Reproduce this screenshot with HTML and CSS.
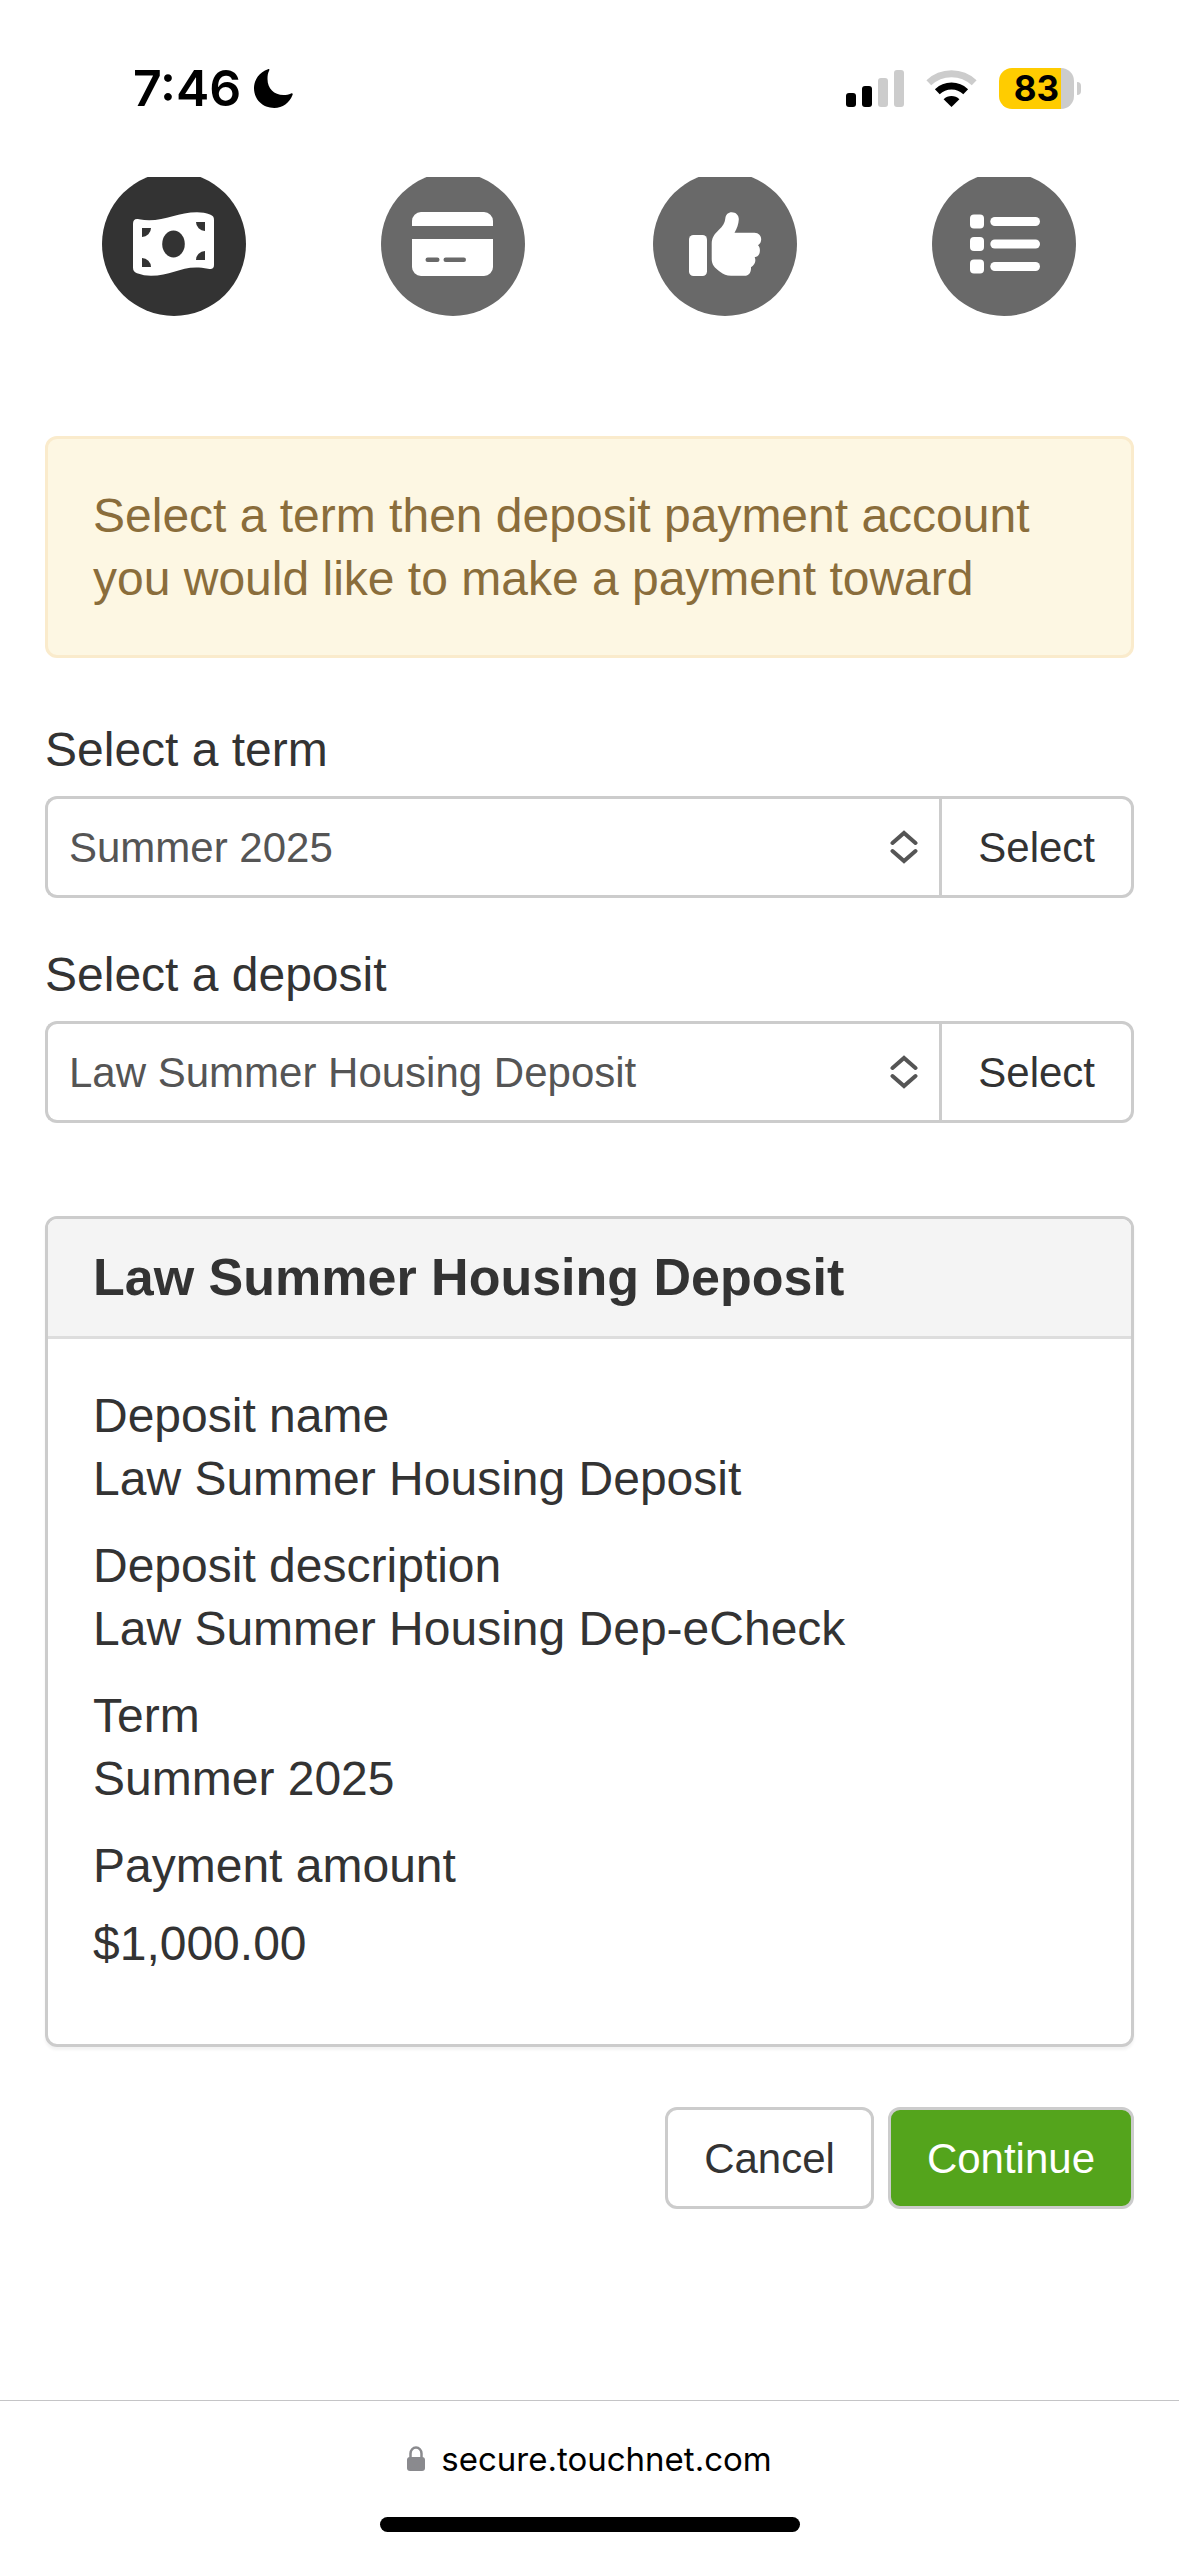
FILE: index.html
```html
<!DOCTYPE html>
<html lang="en">
<head>
  <meta charset="UTF-8" />
  <meta name="viewport" content="width=device-width, initial-scale=1.0" />
  <title>Deposit Payment</title>
  <link rel="stylesheet" href="styles.css">
</head>
<body>
  <header class="status-bar">
    <div class="status-time">
      <span>7:46</span>
      <svg width="39" height="39" viewBox="0 0 39 39" aria-hidden="true">
        <path d="M14 0.3c1.200-0.500 1.800 0 1.200 1.200C13.800 4 13.500 7 13.500 10c0 9.500 6.500 16 16 16 2.800 0 5-0.400 7.600-1.500 1.300-0.500 1.900 0.200 1.500 1.300C35.500 34 28.500 39 20.300 39 8.800 39 0 30.500 0 19.300 0 10.500 5.500 3.200 14 0.300z"/>
      </svg>
    </div>
    <div class="status-icons">
      <svg width="58" height="38" viewBox="0 0 58 38" aria-hidden="true">
        <rect x="0" y="23" width="10" height="14" rx="3"/>
        <rect x="16" y="16" width="10" height="21" rx="3"/>
        <rect x="32" y="8" width="10" height="29" rx="3" fill="#ccc"/>
        <rect x="48" y="0" width="10" height="37" rx="3" fill="#ccc"/>
      </svg>
      <svg width="51" height="38" viewBox="0 0 51 38" fill="none" stroke-width="7" aria-hidden="true">
        <path d="M2.800 12.800A33 33 0 0 1 48.200 12.800" stroke="#ccc"/>
        <path d="M11.300 21.700A20.700 20.700 0 0 1 39.700 21.700" stroke="#000"/>
        <path d="M25.500 37L17.600 29.200A11.400 11.400 0 0 1 33.400 29.200z" fill="#000"/>
      </svg>
      <div class="battery"><span class="battery-level">83</span></div>
    </div>
  </header>

  <main>
    <nav class="steps" aria-label="Payment steps">
      <div class="step-pair">
        <a href="#amount" class="step active" aria-label="Amount">
          <svg viewBox="0 0 144 144">
            <path fill="#fff" d="M31 52c0-4 2-5.500 6-4.700 22 4.300 37-7 58-7 5 0 9 0.800 13 2.200 3 1.100 4 2.500 4 5.500v45c0 3.500-2 4.700-6 3.800-24-5.500-35 7-57 7-5 0-9-0.800-14-2.500-3-1.100-4-2.800-4-5.800z"/>
            <ellipse cx="71.500" cy="72" rx="11.300" ry="13.500"/>
            <path d="M40 56h9a9 9 0 0 1-9 9zM103 50v9a9 9 0 0 1-9-9zM40 95v-9a9 9 0 0 1 9 9zM103 88h-9a9 9 0 0 1 9-9z"/>
          </svg>
        </a>
        <a href="#method" class="step" aria-label="Method">
          <svg viewBox="0 0 144 144">
            <path fill="#fff" d="M31 54v-5a9 9 0 0 1 9-9h63a9 9 0 0 1 9 9v5zM31 67h81v28a9 9 0 0 1-9 9H40a9 9 0 0 1-9-9z"/>
            <rect x="44.500" y="85.500" width="14" height="4.500" rx="2.200"/>
            <rect x="62.500" y="85.500" width="22.500" height="4.500" rx="2.200"/>
          </svg>
        </a>
      </div>
      <div class="step-pair">
        <a href="#confirmation" class="step" aria-label="Confirmation">
          <svg viewBox="0 0 144 144">
            <rect x="36" y="63" width="18" height="41" rx="4.500" fill="#fff"/>
            <path fill="#fff" d="M58.700 72c0-6 2.300-9.500 7-14 4.300-4 6-7 6.600-11.500 0.500-4 3-6.200 6.400-6.200 4.200 0 7.300 3 7.100 7.200-0.200 4.500-1.800 9-4.300 13.200h20c4.200 0 6.700 3 6.700 6.500 0 2.500-1 4.500-3.200 6 1.500 1.500 2 3.300 1.900 5.500-0.200 3.800-2 6-5.200 6.600 1.600 3.500 0.300 7.500-3.700 10 0.200 5-2 8.400-6.500 8.400H78c-4.500 0-7.500-1.500-11-4-5.500-4-8.300-7-8.300-12.700z"/>
          </svg>
        </a>
        <a href="#receipt" class="step" aria-label="Receipt">
          <svg viewBox="0 0 144 144">
            <g fill="#fff">
              <rect x="38" y="42.500" width="14" height="14" rx="4"/>
              <rect x="38" y="65" width="14" height="14" rx="4"/>
              <rect x="38" y="87.500" width="14" height="14" rx="4"/>
              <rect x="58.300" y="45" width="49.700" height="9" rx="4.500"/>
              <rect x="58.300" y="67.500" width="49.700" height="9" rx="4.500"/>
              <rect x="58.300" y="90" width="49.700" height="9" rx="4.500"/>
            </g>
          </svg>
        </a>
      </div>
    </nav>

    <div class="alert">Select a term then deposit payment account you would like to make a payment toward</div>

    <div class="form-group">
      <label for="term">Select a term</label>
      <div class="input-group">
        <div class="select-wrap">
          <select id="term">
            <option>Summer 2025</option>
          </select>
          <svg class="select-arrow" width="28" height="36" viewBox="0 0 28 36"><path d="M2.500 14L14 4 25.500 14M2.500 22L14 32 25.500 22"/></svg>
        </div>
        <button type="button" class="btn">Select</button>
      </div>
    </div>

    <div class="form-group">
      <label for="deposit">Select a deposit</label>
      <div class="input-group">
        <div class="select-wrap">
          <select id="deposit">
            <option>Law Summer Housing Deposit</option>
          </select>
          <svg class="select-arrow" width="28" height="36" viewBox="0 0 28 36"><path d="M2.500 14L14 4 25.500 14M2.500 22L14 32 25.500 22"/></svg>
        </div>
        <button type="button" class="btn">Select</button>
      </div>
    </div>

    <section class="panel">
      <h2>Law Summer Housing Deposit</h2>
      <dl>
        <div class="detail">
          <dt>Deposit name</dt>
          <dd>Law Summer Housing Deposit</dd>
        </div>
        <div class="detail">
          <dt>Deposit description</dt>
          <dd>Law Summer Housing Dep-eCheck</dd>
        </div>
        <div class="detail">
          <dt>Term</dt>
          <dd>Summer 2025</dd>
        </div>
        <div class="detail">
          <dt>Payment amount</dt>
          <dd class="amount">$1,000.00</dd>
        </div>
      </dl>
    </section>

    <div class="actions">
      <button type="button" class="btn">Cancel</button>
      <button type="submit" class="btn btn-primary">Continue</button>
    </div>
  </main>

  <footer class="browser-bar">
    <a href="#" class="address">
      <svg width="18" height="26" viewBox="0 0 18 26" aria-hidden="true">
        <rect x="0" y="11" width="18" height="14" rx="3" fill="#8a8a8e"/>
        <path d="M3.500 12V7.500a5.500 6 0 0 1 11 0V12" fill="none" stroke="#8a8a8e" stroke-width="2.500"/>
      </svg>
      secure.touchnet.com
    </a>
    <div class="home-indicator"></div>
  </footer>
</body>
</html>
```
FILE: styles.css
```css
* {
  box-sizing: border-box;
}
body {
  margin: 0;
  min-height: 100vh;
  display: flex;
  flex-direction: column;
  font-family: "Liberation Sans", Arial, sans-serif;
  font-size: 48px;
  line-height: 63px;
  background-color: #fff;
  color: #333;
}
svg {
  display: block;
}

/* Phone status bar */
.status-bar {
  height: 177px;
  padding: 0 98px 0 133px;
  display: flex;
  justify-content: space-between;
  align-items: center;
  font-family: Inter, sans-serif;
  font-size: 50px;
  font-weight: 600;
  color: #000;
}
.status-time {
  display: flex;
  align-items: center;
  gap: 13px;
}
.status-icons {
  display: flex;
  align-items: center;
  gap: 22px;
}
.battery {
  position: relative;
  width: 75px;
  height: 41px;
  margin-right: 7px;
  border-radius: 13px;
  background: linear-gradient(to right, #ffcc00 83%, #ccc 83%);
  text-align: center;
}
.battery::after {
  content: "";
  position: absolute;
  left: 78px;
  top: 14px;
  width: 4px;
  height: 13px;
  border-radius: 0 4px 4px 0;
  background-color: #ccc;
}
.battery-level {
  display: block;
  font-size: 35px;
  font-weight: 700;
  line-height: 41px;
}

main {
  flex: 1;
  padding: 0 45px;
  overflow: hidden;
}

/* Payment steps, scrolled slightly under the status bar */
.steps {
  display: flex;
  justify-content: space-between;
  margin: -5px 58px 120px 57px;
}
.step-pair {
  display: flex;
  gap: 135px;
}
.step {
  width: 144px;
  height: 144px;
  border-radius: 50%;
  background-color: #696969;
  fill: #696969;
}
.step.active {
  background-color: #333;
  fill: #333;
}

.alert {
  padding: 45px;
  margin-bottom: 60px;
  border: 3px solid #faebcc;
  border-radius: 12px;
  background-color: #fdf7e3;
  color: #8a6d3b;
}

/* Form */
.form-group {
  margin-bottom: 45px;
}
label {
  display: block;
  margin-bottom: 15px;
}
.input-group {
  display: flex;
}
.select-wrap {
  position: relative;
  flex: 1;
}
select {
  appearance: none;
  display: block;
  width: 100%;
  height: 102px;
  padding: 0 72px 0 21px;
  border: 3px solid #ccc;
  border-right: none;
  border-radius: 12px 0 0 12px;
  background-color: #fff;
  color: #555;
  font-family: inherit;
  font-size: 42px;
}
.select-arrow {
  position: absolute;
  right: 21px;
  top: 33px;
  fill: none;
  stroke: #555;
  stroke-width: 4;
  stroke-linecap: round;
  pointer-events: none;
}
.btn {
  height: 102px;
  padding: 2px 36px 0;
  border: 3px solid #ccc;
  border-radius: 12px;
  background-color: #fff;
  color: #333;
  font-family: inherit;
  font-size: 42px;
  cursor: pointer;
}
.input-group .btn {
  border-radius: 0 12px 12px 0;
}
.btn-primary {
  background-color: #54a41c;
  color: #fff;
}

/* Deposit details */
.panel {
  margin-top: 93px;
  border: 3px solid #ccc;
  border-radius: 12px;
  box-shadow: 0 3px 3px rgba(0, 0, 0, 0.05);
  overflow: hidden;
}
.panel h2 {
  margin: 0;
  padding: 27px 45px;
  border-bottom: 3px solid #ddd;
  background-color: #f4f4f4;
  font-size: 52px;
}
.panel dl {
  margin: 0;
  padding: 45px;
}
.panel dd {
  margin: 0;
}
.detail {
  margin-bottom: 24px;
}
.panel .amount {
  margin-top: 15px;
}

.actions {
  display: flex;
  justify-content: flex-end;
  gap: 14px;
  margin-top: 60px;
}

/* Browser address bar */
.browser-bar {
  padding: 36px 0 24px;
  border-top: 1px solid #c4c4c6;
}
.address {
  display: flex;
  justify-content: center;
  align-items: center;
  gap: 16px;
  font-family: Inter, sans-serif;
  font-size: 33px;
  line-height: 44px;
  color: #000;
  text-decoration: none;
}
.home-indicator {
  width: 420px;
  height: 15px;
  margin: 36px auto 0;
  border-radius: 8px;
  background-color: #000;
}
```
